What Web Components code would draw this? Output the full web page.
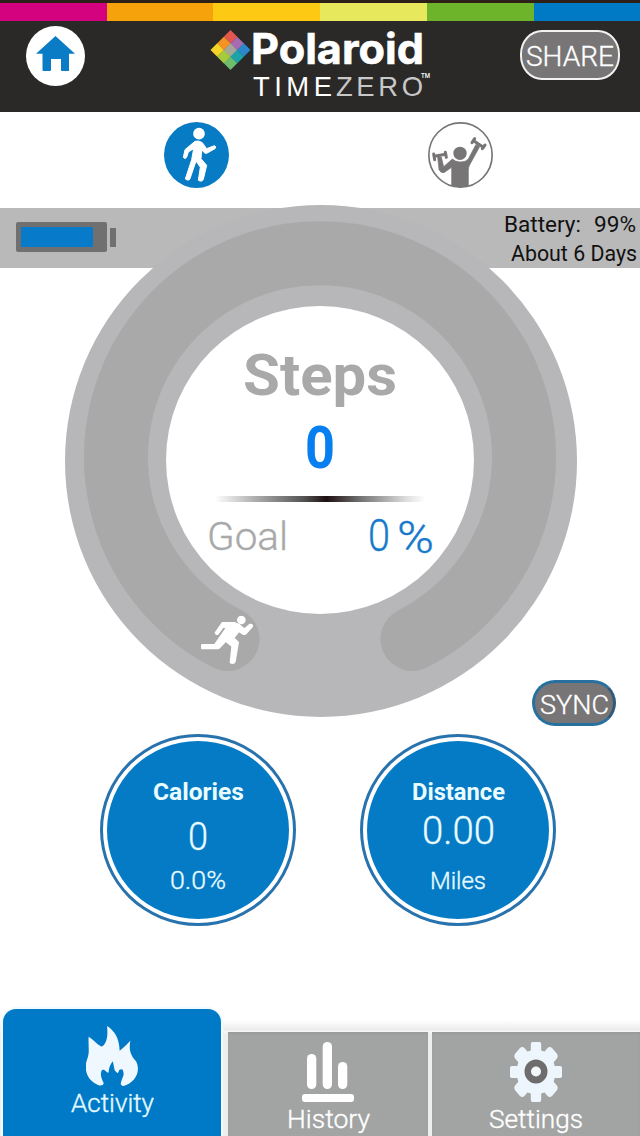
<!DOCTYPE html>
<html lang="en">
<head>
<meta charset="utf-8">
<title>Activity</title>
<style>
body{margin:0;background:#fff;font-family:Roboto,"Open Sans","Liberation Sans",sans-serif}
</style>
</head>
<body>
<tracker-app></tracker-app>
<script>
function define(name, html, setup) {
  const tpl = document.createElement('template');
  tpl.innerHTML = html;
  customElements.define(name, class extends HTMLElement {
    connectedCallback() {
      if (this.shadowRoot) return;
      this.attachShadow({mode: 'open'}).append(tpl.content.cloneNode(true));
      if (setup) setup(this, this.shadowRoot);
    }
  });
}

/* One line of text whose box is its cap height, condensed or expanded to a set width. */
define('fit-text', `
<style>:host{display:block;flex:none}svg{display:block;overflow:visible}text{fill:currentColor;stroke:currentColor;stroke-width:var(--ink,0)}</style>
<svg><text x="0"></text></svg>`, (el, root) => {
  const w = +el.getAttribute('w'), cap = +el.getAttribute('cap');
  const svg = root.querySelector('svg'), t = root.querySelector('text');
  const weight = el.getAttribute('weight') || 300;
  svg.setAttribute('width', w); svg.setAttribute('height', cap);
  el.style.width = w + 'px'; el.style.height = cap + 'px';
  t.setAttribute('y', cap);
  t.setAttribute('font-size', (cap / 0.711).toFixed(2));
  t.setAttribute('font-weight', weight);
  if (weight == 300) t.style.setProperty('--ink', '.35px');
  if (el.hasAttribute('face')) t.setAttribute('font-family', el.getAttribute('face'));
  t.setAttribute('textLength', w);
  t.setAttribute('lengthAdjust', el.hasAttribute('spaced') ? 'spacing' : 'spacingAndGlyphs');
  t.textContent = el.getAttribute('label');
});

define('brand-logo', `
<style>
:host{display:grid;grid-template-columns:43px 180px;color:#fff;margin-top:9px}
.mark{display:block}
.words{display:flex;flex-direction:column}
.line{display:flex}
.zero{color:#c8c8c8}
</style>
<svg class="mark" width="41" height="40" viewBox="-20.5 -20 41 40"><g transform="rotate(45) scale(.943)">
<rect x="-15" y="-15" width="10.200" height="10.200" fill="#e4574c"/><rect x="-5" y="-15" width="10.200" height="10.200" fill="#a66bb0"/><rect x="5" y="-15" width="10" height="10.200" fill="#2b87cb"/>
<rect x="-15" y="-5" width="10.200" height="10.200" fill="#f39322"/><rect x="-5" y="-5" width="10.200" height="10.200" fill="#a4a79a"/><rect x="5" y="-5" width="10" height="10.200" fill="#1aa3a8"/>
<rect x="-15" y="5" width="10.200" height="10" fill="#f5d327"/><rect x="-5" y="5" width="10.200" height="10" fill="#a5cb3d"/><rect x="5" y="5" width="10" height="10" fill="#6dbd6c"/></g></svg>
<div class="words">
<fit-text label="Polaroid" w="173" cap="30" weight="700" face="Inter, sans-serif" style="margin-top:4px;margin-left:-2px;--ink:.6px"></fit-text>
<div class="line" style="margin-top:12px">
<fit-text label="TIME" w="79" cap="19.500" weight="400" face="Liberation Sans, sans-serif" spaced></fit-text>
<fit-text class="zero" label="ZERO" w="87" cap="19.500" weight="400" face="Liberation Sans, sans-serif" spaced style="margin-left:4px"></fit-text>
<fit-text label="TM" w="9" cap="5" weight="500" style="margin-top:-3px;margin-left:-2px"></fit-text>
</div></div>`);

define('app-header', `
<style>
:host{display:block;height:112px;background:#2a2928;box-sizing:border-box;border-top:3px solid #2c2019}
.stripe{display:grid;grid-template-columns:107px 106px 107px 107px 107px 106px;height:18px}
.row{display:grid;grid-template-columns:210px 310px 120px;height:88px}
.home{display:block;margin:5px 0 0 26px}
.share{box-sizing:border-box;width:100px;height:50px;margin-top:9px;border:2px solid #f2f2f2;border-radius:22px/24px;background:#777576;color:#fff;display:flex;align-items:center;justify-content:center}
</style>
<div class="stripe"><i style="background:#d4027f"></i><i style="background:#f6a20a"></i><i style="background:#fdc912"></i><i style="background:#e8e85d"></i><i style="background:#6eb42a"></i><i style="background:#007ac5"></i></div>
<div class="row">
<svg class="home" width="59" height="60" viewBox="26 26 59 60"><ellipse cx="55.5" cy="56" rx="29.5" ry="30" fill="#fff"/><path d="M55.5 36L75 53.7H69V70.5Q69 71 68 71H61.5Q61 71 61 70V59H51V70Q51 71 50 71H43.5Q42.5 71 42.5 70V53.7H36Z" fill="#0a7cc6"/></svg>
<brand-logo></brand-logo>
<div class="share"><fit-text label="SHARE" w="88" cap="19.5" style="margin-top:2px"></fit-text></div>
</div>`);

define('mode-switch', `
<style>:host{display:grid;grid-template-columns:264px 264px;padding:10px 0 0 164px;height:86px;box-sizing:border-box}svg{display:block}</style>
<svg width="65" height="66" viewBox="72 21 195 198"><ellipse cx="169.500" cy="120" rx="97.500" ry="99" fill="#077bc4"/>
<circle cx="177" cy="56" r="17.500" fill="#fff"/>
<path d="M165 79Q176 75 187 83L200 101L223 92Q231 95 225 101L200 115Q195 117 190 110L185 105L183 131L200 151L190 193Q187 202 175 196L181 157L168 138L150 191Q147 199 136 192L155 134L161 101L145 111L140 127Q135 134 130 127L135 104Z" fill="#fff" stroke="#fff" stroke-width="3" stroke-linejoin="round"/></svg>
<svg width="65" height="66" viewBox="864 21 195 198"><ellipse cx="961.500" cy="120" rx="95" ry="96.500" fill="#fff" stroke="#777576" stroke-width="5"/>
<g fill="#777576"><circle cx="960" cy="115" r="20"/><path stroke="#777576" stroke-width="2" stroke-linejoin="round" d="M904 126L911 155L937 132Q945 140 960 141Q978 141 985 132L1008 88L1019 95L990 148Q985 155 985 166V212Q960 220 935 212V157L912 173Q902 175 897 164L893 126Z"/></g>
<g fill="none" stroke="#777576" stroke-width="9" stroke-linecap="round"><path d="M883 124L917 118M1002 78L1030 97"/><path d="M881 117L884 134M916 112L919 127M1004 71L996 83M1035 90L1027 101"/></g></svg>`);

define('battery-status', `
<style>
:host{display:flex;height:60px;margin-top:10px;background:#b9b9b9;justify-content:space-between;color:#111}
.cell{display:flex;align-items:center;margin:14px 0 0 16px;height:30px}
.body{width:91px;height:30px;box-sizing:border-box;padding:5px;background:#707070;border-radius:2px}
.level{height:20px;width:72px;background:#077bc9}
.tip{width:6px;height:19px;margin-left:3px;background:#707070}
.info{width:136px}
.info div{display:flex;justify-content:space-between}
</style>
<div class="cell"><div class="body"><div class="level"></div></div><div class="tip"></div></div>
<div class="info"><div style="padding:8px 4px 0 0"><fit-text label="Battery:" w="77" cap="15.500" weight="400"></fit-text><fit-text label="99%" w="42" cap="15.500" weight="400"></fit-text></div>
<div style="padding:13px 2px 0 7px"><fit-text label="About 6 Days" w="126" cap="15.500" weight="400"></fit-text></div></div>`);

define('steps-dial', `
<style>
:host{display:grid;width:512px;height:513px;margin:-63px 0 0 65px}
:host>*{grid-area:1/1}
svg{display:block}
.data{display:flex;flex-direction:column;align-items:center;width:308px;margin-left:101px;color:#a9a9a9}
.rule{width:210px;height:6px;margin-top:27.500px;flex:none;background:linear-gradient(90deg,#fff,#aaa 20%,#555 42%,#1d1012 53%,#777 70%,#ddd 91%,#fff)}
.goal{display:flex;width:227px;margin-top:17px;align-items:flex-start}
.pct{display:flex;margin-left:auto;color:#187acb}
</style>
<svg width="512" height="513" viewBox="65 205 512 513"><circle cx="321" cy="461" r="256" fill="#b7b7b9"/>
<path d="M227.500 639A204 204 0 1 1 412.500 639" fill="none" stroke="#a9a9a9" stroke-width="64" stroke-linecap="round"/>
<circle cx="320" cy="460" r="154" fill="#fff"/>
<svg x="201" y="615.670" width="52" height="48.330" viewBox="153 107 156 145"><circle cx="274" cy="120" r="13" fill="#fff"/><path d="M217 128H253L268 134L283 147L300 133Q308 132 307 140L287 162Q283 165 277 161L267 154L251 174L265 187L255 246Q251 252 241 248L246 199L227 184L210 202Q207 206 202 206H156Q152 200 156 194H194L230 142L219 141L204 162Q198 166 196 158Z" fill="#fff" stroke="#fff" stroke-width="4" stroke-linejoin="round"/></svg>
</svg>
<div class="data">
<fit-text label="Steps" w="154" cap="41" weight="700" style="margin-top:149px"></fit-text>
<fit-text label="0" w="30" cap="41.500" weight="700" style="margin-top:30.500px;color:#077ff0"></fit-text>
<div class="rule" style="margin-top:28.500px"></div>
<div class="goal"><fit-text label="Goal" w="81" cap="27" style="margin-top:4px"></fit-text><div class="pct"><fit-text label="0" w="22" cap="31" style="margin-top:1px"></fit-text><fit-text label="%" w="37" cap="31" style="margin:3px 0 0 7px"></fit-text></div></div>
</div>`);

define('sync-button', `
<style>:host{position:absolute;left:532px;top:680px;width:84px;height:46px;box-sizing:border-box;border:3px solid #28719f;border-right-color:#315b79;border-radius:23px;background:#777576;color:#fff;display:flex;align-items:center;justify-content:center}</style>
<fit-text label="SYNC" w="69" cap="18.500" style="margin-top:2px"></fit-text>`);

define('metric-badge', `
<style>
:host{display:flex;flex-direction:column;align-items:center;box-sizing:border-box;width:196px;height:192px;border-radius:50%;border:3px solid #2873ad;background:#fff;padding:4px}
.disc{width:182px;height:178px;border-radius:50%;background:#057ac5;color:#e9fcff;display:flex;flex-direction:column;align-items:center}
</style>
<div class="disc"><slot></slot></div>`);

define('nav-tab', `
<style>
:host{display:flex;flex-direction:column;align-items:center;height:104px;background:#a2a4a3;box-shadow:inset 0 2px 2px #8d8f8e66;color:#fff;box-sizing:border-box;padding-top:10px}
:host([active]){height:127px;background:#007ac7;box-shadow:0 0 0 2px #f2fbff;border-radius:13px 13px 0 0;padding-top:17px;color:#e6fbff}
</style>
<slot></slot>`);

define('tab-bar', `
<style>
:host{display:grid;grid-template-columns:218px 200px 208px;column-gap:4px;align-items:end;padding-left:3px;height:130px;box-sizing:border-box;background:linear-gradient(#fff 14px,#ececec 24px,#fafafa 26px,#eee 27px)}
.h{margin-left:3px;width:200px}.s{margin-left:3px;width:208px}
svg{display:block}
</style>
<nav-tab active><svg width="52" height="60" viewBox="258 78 156 180"><path d="M266 110C281 119 299 141 307 139C319 132 325 109 321 78C343 91 358 115 359 152C367 145 378 137 391 122C386 152 392 166 408 184C424 214 405 250 370 258C355 255 366 241 371 224C370 206 366 205 357 211C354 226 348 215 344 211C341 199 341 192 338 184C331 193 326 204 326 217C320 222 318 207 306 210C299 221 304 236 311 249C310 259 297 258 289 252C261 239 250 206 262 176C270 155 264 138 266 110Z" fill="#f0f8ff"/></svg>
<fit-text label="Activity" w="83" cap="18" style="margin-top:8px"></fit-text></nav-tab>
<nav-tab class="h"><svg width="52" height="60" viewBox="302 1042 52 60" fill="#fff"><rect x="307" y="1054" width="9.300" height="35" rx="4.600"/><rect x="322.700" y="1042" width="9.300" height="47" rx="4.600"/><rect x="338" y="1062" width="9.300" height="27" rx="4.600"/><rect x="302" y="1094" width="52" height="8" rx="3"/></svg>
<fit-text label="History" w="83" cap="18" style="margin-top:8px"></fit-text></nav-tab>
<nav-tab class="s"><svg width="52" height="60" viewBox="-26 -30 52 60"><g fill="#edf5fd" transform="scale(.867 1)"><circle r="22.500"/>
<rect x="-6" y="-30" width="12" height="60" rx="2"/><rect x="-6" y="-30" width="12" height="60" rx="2" transform="rotate(90)"/><rect x="-7.500" y="-30" width="15" height="60" rx="4" transform="rotate(45)"/><rect x="-7.500" y="-30" width="15" height="60" rx="4" transform="rotate(-45)"/></g><ellipse cy="-.500" rx="11.500" ry="12" fill="#6e6c6d"/><circle cy="-.500" r="5" fill="#f4f8fb"/></svg>
<fit-text label="Settings" w="94" cap="18" style="margin-top:8px"></fit-text></nav-tab>`);

define('tracker-app', `
<style>
:host{display:block;position:relative;width:640px;height:1136px;overflow:hidden;background:#fff}
.metrics{display:grid;grid-template-columns:196px 196px;column-gap:64px;padding-left:100px;margin-top:16px;height:272px}
</style>
<app-header></app-header>
<mode-switch></mode-switch>
<battery-status></battery-status>
<steps-dial></steps-dial>
<sync-button></sync-button>
<div class="metrics">
<metric-badge><fit-text label="Calories" w="91" cap="16.500" weight="700" style="margin-top:42px"></fit-text><fit-text label="0" w="20" cap="28" style="margin-top:22.500px"></fit-text><fit-text label="0.0%" w="56" cap="18" style="margin-top:20.500px"></fit-text></metric-badge>
<metric-badge><fit-text label="Distance" w="93" cap="16.500" weight="700" style="margin-top:42px"></fit-text><fit-text label="0.00" w="73" cap="28" style="margin-top:16px"></fit-text><fit-text label="Miles" w="56" cap="16.500" style="margin-top:28px"></fit-text></metric-badge>
</div>
<tab-bar></tab-bar>`);
</script>
</body>
</html>
